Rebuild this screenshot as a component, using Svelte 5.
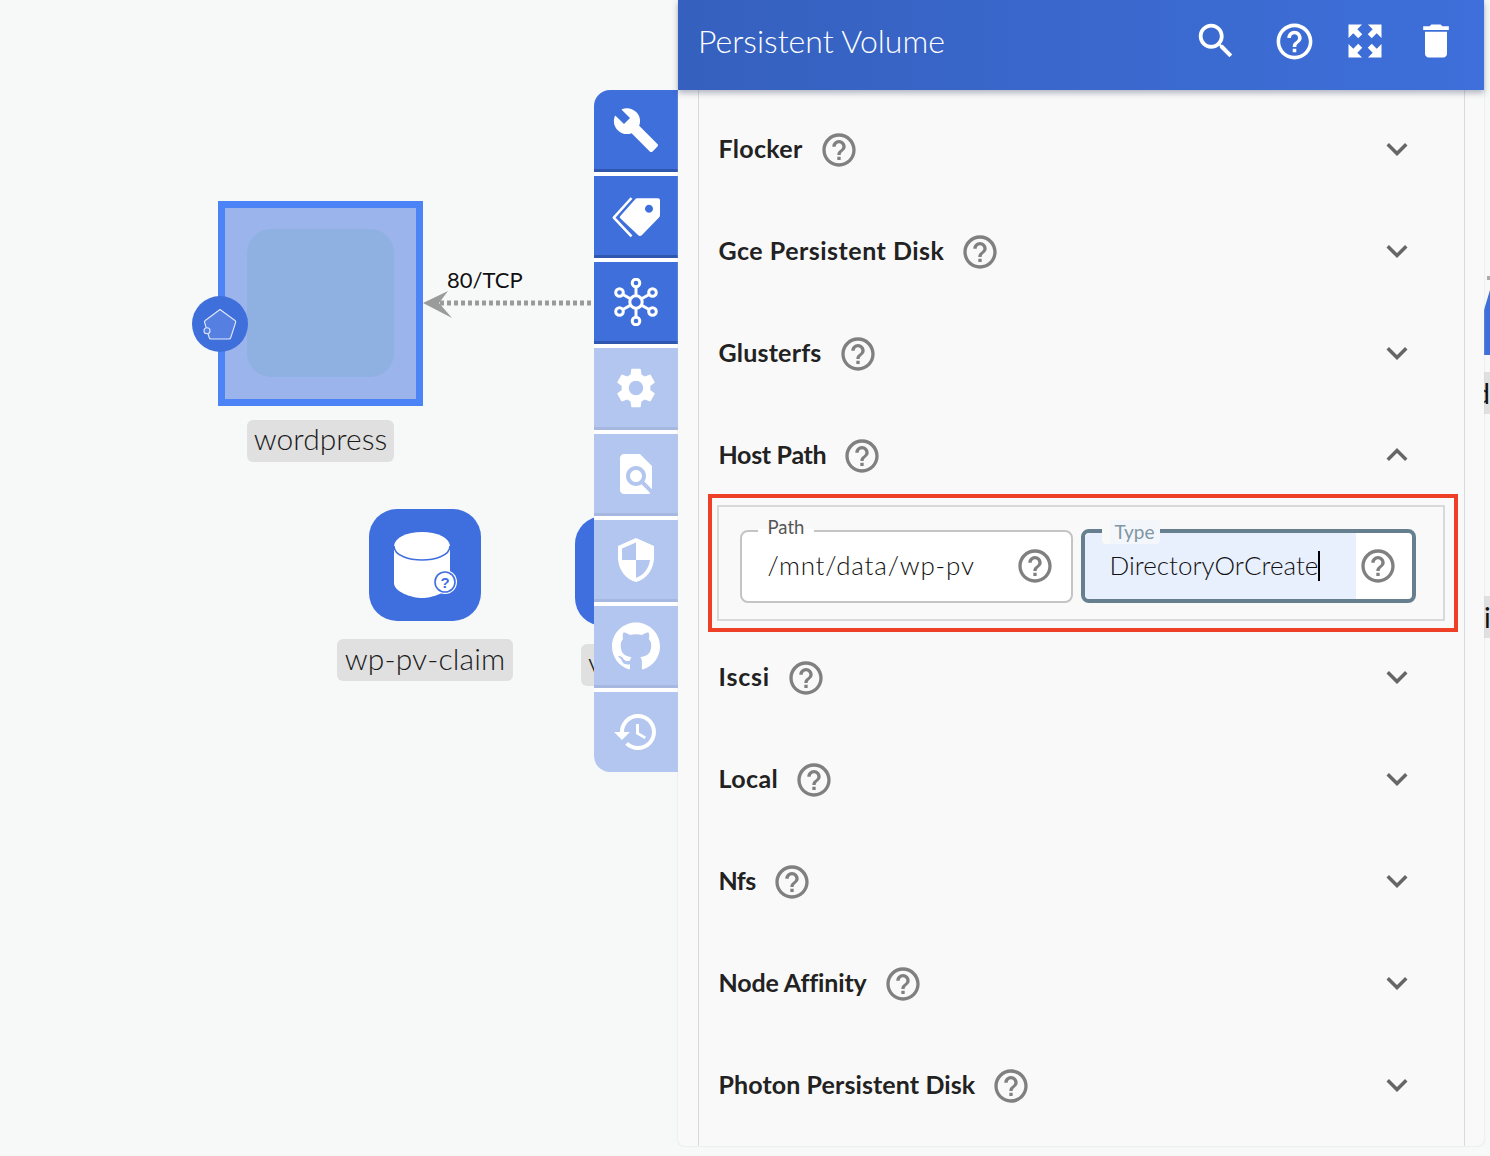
<script>
  const p = {
    help: "M11 18h2v-2h-2v2zm1-16C6.48 2 2 6.48 2 12s4.48 10 10 10 10-4.48 10-10S17.52 2 12 2zm0 18c-4.41 0-8-3.59-8-8s3.59-8 8-8 8 3.59 8 8-3.59 8-8 8zm0-14c-2.21 0-4 1.79-4 4h2c0-1.1.9-2 2-2s2 .9 2 2c0 2-3 1.75-3 5h2c0-2.25 3-2.5 3-5 0-2.21-1.79-4-4-4z",
    search: "M15.5 14h-.79l-.28-.27C15.41 12.59 16 11.11 16 9.5 16 5.91 13.09 3 9.5 3S3 5.91 3 9.5 5.91 16 9.5 16c1.61 0 3.09-.59 4.23-1.57l.27.28v.79l5 4.99L20.49 19l-4.99-5zm-6 0C7.01 14 5 11.99 5 9.5S7.01 5 9.5 5 14 7.01 14 9.5 11.99 14 9.5 14z",
    zoom: "M13.6 3H21v7.4l-2.6-2.6-2.7 2.7-2.2-2.2 2.7-2.7zM10.4 3H3v7.4l2.6-2.6 2.7 2.7 2.2-2.2-2.7-2.7zM13.6 21H21v-7.4l-2.6 2.6-2.7-2.7-2.2 2.2 2.7 2.7zM10.4 21H3v-7.4l2.6 2.6 2.7-2.7 2.2 2.2-2.7 2.7z",
    trash: "M6 19c0 1.1.9 2 2 2h8c1.1 0 2-.9 2-2V7H6v12zM19 4h-3.5l-1-1h-5l-1 1H5v2h14V4z",
    more: "M16.59 8.59L12 13.17 7.41 8.59 6 10l6 6 6-6z",
    less: "M12 8l-6 6 1.41 1.41L12 10.83l4.59 4.58L18 14z",
    build: "M22.7 19l-9.1-9.1c.9-2.3.4-5-1.5-6.9-2-2-5-2.4-7.4-1.3L9 6 6 9 1.6 4.7C.4 7.1.9 10.1 2.9 12.1c1.9 1.9 4.6 2.4 6.9 1.5l9.1 9.1c.4.4 1 .4 1.4 0l2.3-2.3c.5-.4.5-1.1.1-1.4z",
    gear: "M19.14 12.94c.04-.3.06-.61.06-.94 0-.32-.02-.64-.07-.94l2.03-1.58c.18-.14.23-.41.12-.61l-1.92-3.32c-.12-.22-.37-.29-.59-.22l-2.39.96c-.5-.38-1.03-.7-1.62-.94l-.36-2.54c-.04-.24-.24-.41-.48-.41h-3.84c-.24 0-.43.17-.47.41l-.36 2.54c-.59.24-1.13.57-1.62.94l-2.39-.96c-.22-.08-.47 0-.59.22L2.74 8.87c-.12.21-.08.47.12.61l2.03 1.58c-.05.3-.09.63-.09.94s.02.64.07.94l-2.03 1.58c-.18.14-.23.41-.12.61l1.92 3.32c.12.22.37.29.59.22l2.39-.96c.5.38 1.03.7 1.62.94l.36 2.54c.05.24.24.41.48.41h3.84c.24 0 .44-.17.47-.41l.36-2.54c.59-.24 1.13-.56 1.62-.94l2.39.96c.22.08.47 0 .59-.22l1.92-3.32c.12-.22.07-.47-.12-.61l-2.01-1.58zM12 15.6c-1.98 0-3.6-1.62-3.6-3.6s1.62-3.6 3.6-3.6 3.6 1.62 3.6 3.6-1.62 3.6-3.6 3.6z",
    find: "M20 19.59V8l-6-6H6c-1.1 0-1.99.9-1.99 2L4 20c0 1.1.89 2 1.99 2H18c.45 0 .85-.15 1.19-.4l-4.43-4.43c-.8.52-1.74.83-2.76.83-2.76 0-5-2.24-5-5s2.24-5 5-5 5 2.24 5 5c0 1.02-.31 1.96-.83 2.75L20 19.59zM9 13c0 1.66 1.34 3 3 3s3-1.34 3-3-1.34-3-3-3-3 1.34-3 3z",
    shield: "M12 1L3 5v6c0 5.55 3.84 10.74 9 12 5.16-1.26 9-6.45 9-12V5l-9-4zm0 10.99h7c-.53 4.12-3.28 7.79-7 8.94V12H5V6.3l7-3.11v8.8z",
    github: "M12 .297c-6.63 0-12 5.373-12 12 0 5.303 3.438 9.8 8.205 11.385.6.113.82-.258.82-.577 0-.285-.01-1.04-.015-2.04-3.338.724-4.042-1.61-4.042-1.61C4.422 18.07 3.633 17.7 3.633 17.7c-1.087-.744.084-.729.084-.729 1.205.084 1.838 1.236 1.838 1.236 1.07 1.835 2.809 1.305 3.495.998.108-.776.417-1.305.76-1.605-2.665-.3-5.466-1.332-5.466-5.93 0-1.31.465-2.38 1.235-3.22-.135-.303-.54-1.523.105-3.176 0 0 1.005-.322 3.3 1.23.96-.267 1.98-.399 3-.405 1.02.006 2.04.138 3 .405 2.28-1.552 3.285-1.23 3.285-1.23.645 1.653.24 2.873.12 3.176.765.84 1.23 1.91 1.23 3.22 0 4.61-2.805 5.625-5.475 5.92.42.36.81 1.096.81 2.22 0 1.606-.015 2.896-.015 3.286 0 .315.21.69.825.57C20.565 22.092 24 17.592 24 12.297c0-6.627-5.373-12-12-12",
    history: "M13 3c-4.97 0-9 4.03-9 9H1l3.89 3.89.07.14L9 12H6c0-3.87 3.13-7 7-7s7 3.13 7 7-3.13 7-7 7c-1.93 0-3.68-.79-4.94-2.06l-1.42 1.42C8.27 19.99 10.51 21 13 21c4.97 0 9-4.03 9-9s-4.03-9-9-9zm-1 5v5l4.28 2.54.72-1.21-3.5-2.08V8H12z"
  };
  const tabs = [
    { k: "build", on: true }, { k: "tags", on: true }, { k: "hub", on: true },
    { k: "gear" }, { k: "find" }, { k: "shield" }, { k: "github" }, { k: "history" }
  ];
  const before = [["Flocker", .3], ["Gce Persistent Disk", .5], ["Glusterfs", .2]];
  const after = [["Iscsi", .8], ["Local", .4], ["Nfs", -.6], ["Node Affinity", -.15], ["Photon Persistent Disk", .1]];
  const hubNodes = [[24,5],[24,43],[7.5,14.5],[40.5,14.5],[7.5,33.5],[40.5,33.5]];
</script>

{#snippet icon(d, size, cls)}
  <svg class={cls} width={size} height={size} viewBox="0 0 24 24" fill="currentColor"><path {d} /></svg>
{/snippet}

{#snippet row(title, ls, open)}
  <div class="row">
    <span class="row-title" style="letter-spacing:{ls}px">{title}</span>
    {@render icon(p.help, 40, "row-help nudge")}
    <span class="spacer"></span>
    {@render icon(open ? p.less : p.more, 42, "chev")}
  </div>
{/snippet}

<div class="page">
  <section class="canvas">
    <div class="pod">
      <div class="pod-inner"></div>
      <div class="pod-badge">
        <svg width="32" height="32" viewBox="0 0 32 32">
          <path d="M16 1.5 L31 12.5 Q32 13.3 31.6 14.5 L26.8 29.5 Q26.3 31 25 31 H7 Q5.6 31 5.2 29.5 L0.6 14.5 Q.2 13.3 1.2 12.5 Z" fill="#5580e2" stroke="#dfe7fa" stroke-width="1.1" stroke-linejoin="round"/>
          <circle cx="3" cy="22.7" r="3" fill="#5580e2" stroke="#dfe7fa" stroke-width="1.1"/>
        </svg>
      </div>
    </div>
    <div class="label wp">wordpress</div>

    <svg class="edge" width="172" height="40" viewBox="0 0 172 40">
      <line x1="18" y1="14" x2="172" y2="14" stroke="#9b9b9b" stroke-width="5" stroke-dasharray="4 3"/>
      <path d="M1 14 L26 2 L17 14 L30 29 Z" fill="#9b9b9b"/>
    </svg>
    <div class="edge-label">80/TCP</div>

    <div class="vol">
      <svg width="112" height="112" viewBox="0 0 112 112">
        <path d="M25 37 V74 C25 83 43 89 53 89 C63 89 81 83 81 74 V37 Z" fill="#fff"/>
        <ellipse cx="53" cy="37" rx="28" ry="14" fill="#fff"/>
        <path d="M25 37 C25 47 41 51 53 51 C65 51 81 47 81 37" fill="none" stroke="#3f6fdf" stroke-width="1.6"/>
        <circle cx="76" cy="73" r="12" fill="#fff"/>
        <circle cx="76" cy="73" r="10.8" fill="#3f6fdf"/>
        <circle cx="76" cy="73" r="9.2" fill="#fff"/>
        <text x="76" y="78.5" text-anchor="middle" class="q">?</text>
      </svg>
    </div>
    <div class="label claim">wp-pv-claim</div>

    <div class="vol second"></div>
    <div class="label third">v</div>

    <nav class="tabs">
      {#each tabs as t}
        <div class="tab" class:on={t.on}>
          {#if t.k === "tags"}
            <svg width="48" height="48" viewBox="0 0 48 48" fill="#fff">
              <path d="M19.5 6 L1.8 25.7 L19.5 44.3" fill="none" stroke="#fff" stroke-width="2.6" stroke-linejoin="round"/>
              <path fill-rule="evenodd" d="M25 6.3 H46 Q48 6.3 48 8.3 V23 Q48 24.5 47 25.5 L30 43 Q28 45 26 43 L8.5 26.5 Q7 25.5 8.3 24 L23 7.5 Q24 6.3 25 6.3 Z M37 12.7 a4 4 0 1 0 .01 0 Z"/>
            </svg>
          {:else if t.k === "hub"}
            <svg width="48" height="48" viewBox="0 0 48 48" fill="none" stroke="#fff" stroke-width="3">
              {#each hubNodes as n}
                <line x1="24" y1="24" x2={n[0]} y2={n[1]}/>
              {/each}
              <circle cx="24" cy="24" r="6.2" fill="#3f6fdb"/>
              {#each hubNodes as n}
                <circle cx={n[0]} cy={n[1]} r="3.8" fill="#3f6fdb"/>
              {/each}
            </svg>
          {:else}
            {@render icon(p[t.k], 48, "tab-ico")}
          {/if}
        </div>
      {/each}
    </nav>
  </section>

  <section class="panel">
    <header class="head">
      <h1>Persistent Volume</h1>
      <span class="spacer"></span>
      <div class="head-icons">
        {@render icon(p.search, 46, "")}
        {@render icon(p.help, 43, "wide")}
        {@render icon(p.zoom, 44, "")}
        {@render icon(p.trash, 44, "")}
      </div>
    </header>
    <div class="body">
      <div class="inner">
        {#each before as t}{@render row(t[0], t[1], false)}{/each}
        {@render row("Host Path", -.3, true)}
        <div class="mark">
          <div class="group">
            <div class="field">
              <span class="legend">Path</span>
              <span class="value path">/mnt/data/wp-pv</span>
              {@render icon(p.help, 40, "row-help")}
            </div>
            <div class="field focus">
              <span class="legend">Type</span>
              <span class="fill"><span class="value">DirectoryOrCreate</span><i class="caret"></i></span>
              {@render icon(p.help, 40, "row-help")}
            </div>
          </div>
        </div>
        {#each after as t}{@render row(t[0], t[1], false)}{/each}
      </div>
    </div>
  </section>

  <aside class="strip">
    <div class="dot"></div>
    <div class="peek-blue"></div>
    <div class="peek one">d</div>
    <div class="peek two">is</div>
  </aside>
</div>

<style>
  :global(body) { margin: 0; background: #f7f9f8; }
  .page {
    display: flex; width: 1490px; height: 1156px; overflow: hidden;
    background: #f7f9f8; color: #1b1b1b;
    font-family: Lato, "Noto Sans", sans-serif;
  }
  .spacer { flex: 1; }

  .canvas { position: relative; width: 678px; flex: none; }
  .pod {
    position: absolute; left: 218px; top: 201px; width: 205px; height: 205px;
    box-sizing: border-box; border: 7px solid #4c84f8; background: #9bb4ec;
  }
  .pod-inner {
    position: absolute; left: 22px; top: 21px; width: 147px; height: 148px;
    border-radius: 24px; background: #8fb1e2;
  }
  .pod-badge {
    position: absolute; left: -33px; top: 88px; width: 56px; height: 56px; border-radius: 50%;
    background: #3f6fdb; display: flex; align-items: center; justify-content: center;
  }
  .pod-badge svg { overflow: visible; }
  .label {
    position: absolute; height: 42px; box-sizing: border-box; border-radius: 6px;
    background: #dfe0df; font-size: 30px; font-weight: 300; line-height: 37px; text-align: center; white-space: nowrap;
  }
  .wp { left: 247px; top: 420px; width: 147px; }
  .claim { left: 337px; top: 639px; width: 176px; line-height: 38px; letter-spacing: .15px; }
  .third { left: 581px; top: 644px; width: 60px; text-align: left; padding-left: 7px; }
  .edge { position: absolute; left: 422px; top: 289px; }
  .edge-label {
    position: absolute; left: 447px; top: 266px; font-size: 22px; line-height: 28px; color: #111;
    text-shadow: 0 0 3px #fff, 0 0 3px #fff;
  }
  .vol {
    position: absolute; left: 369px; top: 509px; width: 112px; height: 112px; border-radius: 28px; background: #3f6fdf;
  }
  .vol svg { display: block; }
  .second { left: 575px; top: 516px; height: 110px; }
  .q { font: 700 15px "Liberation Sans", sans-serif; fill: #3f6fdf; }

  .tabs {
    position: absolute; left: 594px; top: 90px; width: 84px; display: flex; flex-direction: column; gap: 4px;
    background: #fff; border-radius: 16px 0 0 16px;
  }
  .tab {
    height: 82px; box-sizing: border-box; background: #b3c6ef; border-bottom: 3px solid #a7b8e0;
    display: flex; align-items: center; justify-content: center; color: #fff;
  }
  .tab.on { background: #3f6fdb; border-bottom-color: #2f57b0; }
  .tab:first-child { border-top-left-radius: 16px; }
  .tab:last-child { height: 80px; border-bottom: 0; border-bottom-left-radius: 16px; }
  .tab svg { display: block; }

  .panel {
    width: 806px; flex: none; height: 1146px; display: flex; flex-direction: column;
    background: #f9f9f9; border-radius: 0 0 6px 6px; box-shadow: 0 0 1.5px #c9c9c9;
    position: relative; z-index: 1;
  }
  .head {
    height: 90px; flex: none; display: flex; align-items: center; padding: 0 6px 8px 20px; box-sizing: border-box;
    background: linear-gradient(90deg, #3560be, #3e6fda); color: #fff;
    box-shadow: 0 3px 6px rgba(40, 50, 90, .35); position: relative; z-index: 1;
  }
  .head h1 { margin: 0 0 2px; font-size: 32px; font-weight: 300; }
  .head-icons { display: flex; align-items: center; gap: 27px; padding-right: 20px; }
  .head-icons svg { display: block; }
  .head-icons :global(.wide) { margin: 0 0 0 7px; }

  .body { flex: 1; padding: 0 19px 0 19.5px; min-height: 0; }
  .inner {
    height: 100%; box-sizing: border-box; border: solid #dadada; border-width: 0 1.5px;
    padding: 26px 40px 0 20px;
  }
  .row { display: flex; align-items: center; height: 66px; margin-bottom: 36px; color: #222; }
  .row-title { font-size: 25px; font-weight: 700; margin: -2px 16px 0 0; }
  .row-help { color: #808080; flex: none; display: block; }
  .row :global(.nudge) { margin-top: 2px; }
  .chev { color: #666; display: block; margin-right: 6px; }

  .mark {
    margin: -30px -34px 12px -10.5px; height: 138px; box-sizing: border-box; border: 4.5px solid #ee4027;
    padding: 6.5px 9.5px 6.5px 4.5px;
  }
  .group {
    height: 116px; box-sizing: border-box; border: 2px solid #d9d9d9; display: flex; gap: 8px;
    padding: 22px 27px 0 21px;
  }
  .field {
    position: relative; flex: 1; height: 73px; box-sizing: border-box; border: 2px solid #c4c4c4; border-radius: 8px;
    background: #fff; display: flex; align-items: center; padding-right: 16px; margin-top: 1px;
  }
  .legend {
    position: absolute; left: 16px; top: -17px; padding: 0 10px; font-size: 18.5px; line-height: 24px; color: #555;
    background: linear-gradient(#f9f9f9 60%, #fff 60%);
  }
  .value { font-size: 26px; font-weight: 300; white-space: nowrap; color: #111; margin-top: -2px; }
  .path { margin-left: 26px; flex: 1; letter-spacing: .8px; }
  .focus { border: 4px solid #667f8e; margin-top: 0; padding-right: 14px; height: 74px; }
  .focus .legend {
    left: 17px; top: -13px; font-size: 19px; color: #7f97a3; border-radius: 4px; padding: 0 5px 0 13px; height: 24px;
    background: linear-gradient(90deg, #f9f9f9 8px, #f3f6fb 8px);
  }
  .fill {
    align-self: stretch; flex: 1; display: flex; align-items: center; padding-left: 25px;
    background: #e8f0fe; border-radius: 5px 0 0 5px; margin-right: 2px;
  }
  .caret { width: 2px; height: 30px; background: #000; }

  .strip { position: relative; width: 6px; flex: none; }
  .dot { position: absolute; left: 3px; top: 276px; width: 3px; height: 4px; background: #aaa; }
  .peek-blue {
    position: absolute; left: 0; top: 290px; width: 6px; height: 65px; background: #3f6fdb;
    clip-path: polygon(0 20px, 100% 0, 100% 100%, 0 100%);
  }
  .peek {
    position: absolute; left: 0; width: 6px; height: 42px; overflow: hidden; background: #dfe0df; color: #111;
    font-size: 28px; font-weight: 400; line-height: 42px;
  }
  .one { top: 372px; direction: rtl; }
  .two { top: 596px; }
</style>
